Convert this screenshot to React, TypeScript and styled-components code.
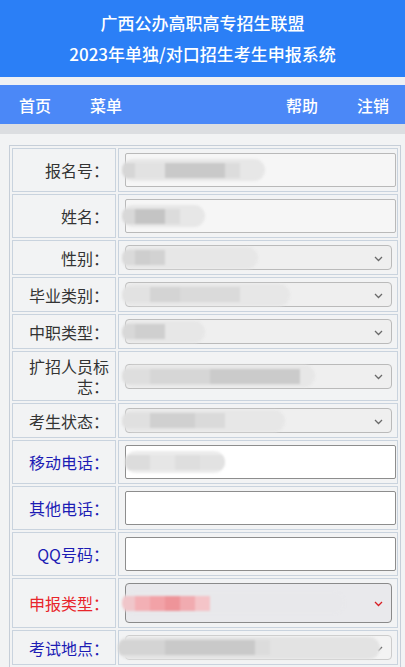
import React from "react";
import styled, { createGlobalStyle } from "styled-components";

const Global = createGlobalStyle`
  html, body { margin: 0; padding: 0; background: #f2f3f4; }
  body { font-family: "Noto Sans CJK SC", "Noto Sans", sans-serif; }
  * { box-sizing: border-box; }
`;

const Page = styled.div`
  width: 405px;
  min-height: 667px;
  overflow: hidden;
  background: #f2f3f4;
`;

const Header = styled.header`
  background: #2b7ff6;
  color: #fff;
  text-align: center;
  padding: 7px 0 8px;
  font-size: 17px;
  line-height: 31px;
  font-weight: 500;
  letter-spacing: 0;
`;

const Gap = styled.div<{ $h: number; $c: string }>`
  height: ${(p) => p.$h}px;
  background: ${(p) => p.$c};
`;

const Nav = styled.nav`
  height: 39px;
  background: #4b88f7;
  display: flex;
  align-items: center;
  padding: 0 16px 0 19px;
  color: #fff;
  font-size: 16px;
  font-weight: 500;
`;

const NavGroup = styled.div`
  display: flex;
  gap: 39px;
`;

const Spacer = styled.div`
  flex: 1;
`;

const NavItem = styled.span`
  white-space: nowrap;
  line-height: 20px;
`;

const Table = styled.table`
  margin: 11px 4px 0 9px;
  width: 392px;
  border: 1px solid #c6ced8;
  border-spacing: 2px;
  table-layout: fixed;
  background: #f2f3f4;
`;

const LabelCell = styled.td<{ $tone: "normal" | "blue" | "red" }>`
  width: 104px;
  border: 1px solid #c9d3de;
  padding: 4px 6px 4px 4px;
  text-align: right;
  vertical-align: middle;
  font-size: 16px;
  line-height: 20px;
  color: ${(p) => (p.$tone === "blue" ? "#1c1cb4" : p.$tone === "red" ? "#e8252b" : "#333")};
`;

const ValueCell = styled.td`
  border: 1px solid #c9d3de;
  padding: 4px 1px 4px 6px;
  vertical-align: middle;
`;

const Field = styled.div`
  position: relative;
`;

const TextInput = styled.input<{ $readonly?: boolean }>`
  display: block;
  width: 100%;
  height: 34px;
  margin: 0;
  border: 1px solid ${(p) => (p.$readonly ? "#b9b9b9" : "#8d8d8d")};
  border-radius: 2px;
  background: ${(p) => (p.$readonly ? "#f6f6f6" : "#fff")};
  font-size: 15px;
  outline: none;
`;

const Select = styled.div<{ $tall?: boolean; $strong?: boolean; $faint?: boolean }>`
  height: ${(p) => (p.$tall ? 40 : 25)}px;
  margin-right: 4px;
  border: 1px solid ${(p) => (p.$strong ? "#8a8a8a" : p.$faint ? "#cccccc" : "#bababa")};
  border-radius: 4px;
  background: ${(p) => (p.$strong ? "#e9e9ec" : p.$faint ? "#f3f3f3" : "#efefef")};
`;

const Chevron = styled.svg`
  position: absolute;
  right: 13px;
  top: 50%;
  width: 9px;
  height: 6px;
  margin-top: -2px;
`;

const Redact = styled.div`
  position: absolute;
  top: 50%;
  height: 22px;
  margin-top: -11px;
  border-radius: 11px;
  background: #e7e7e7;
  filter: blur(1.2px);
  display: flex;
  align-items: center;
  overflow: hidden;
`;

const Block = styled.span`
  display: block;
  height: 15px;
  flex: none;
`;

type Blob = { x: number; w: number; bg?: string; blocks: [number, string][] };
type Row = {
  label: string;
  tone: "normal" | "blue" | "red";
  kind: "ro" | "input" | "select" | "tall" | "faint";
  blob?: Blob;
};

const rows: Row[] = [
  { label: "报名号：", tone: "normal", kind: "ro", blob: { x: -3, w: 143, blocks: [[13, "#d6d6d6"], [30, "#e2e2e2"], [60, "#c9c9c9"], [15, "#dcdcdc"]] } },
  { label: "姓名：", tone: "normal", kind: "ro", blob: { x: -3, w: 83, blocks: [[13, "#d8d8d8"], [30, "#c4c4c4"], [15, "#dcdcdc"]] } },
  { label: "性别：", tone: "normal", kind: "select", blob: { x: -3, w: 136, blocks: [[13, "#dadada"], [15, "#cecece"], [15, "#d2d2d2"]] } },
  { label: "毕业类别：", tone: "normal", kind: "select", blob: { x: -3, w: 168, blocks: [[28, "#e2e2e2"], [30, "#d4d4d4"], [60, "#dadada"]] } },
  { label: "中职类型：", tone: "normal", kind: "select", blob: { x: -3, w: 83, blocks: [[13, "#d8d8d8"], [30, "#cfcfcf"]] } },
  { label: "扩招人员标志：", tone: "normal", kind: "select", blob: { x: -3, w: 193, blocks: [[28, "#dedede"], [60, "#d6d6d6"], [90, "#cbcbcb"]] } },
  { label: "考生状态：", tone: "normal", kind: "select", blob: { x: -3, w: 163, blocks: [[28, "#e0e0e0"], [45, "#d0d0d0"], [30, "#dadada"]] } },
  { label: "移动电话：", tone: "blue", kind: "input", blob: { x: 0, w: 100, bg: "#ececec", blocks: [[25, "#dcdcdc"], [25, "#e6e6e6"], [25, "#dedede"], [25, "#e2e2e2"]] } },
  { label: "其他电话：", tone: "blue", kind: "input" },
  { label: "QQ号码：", tone: "blue", kind: "input" },
  { label: "申报类型：", tone: "red", kind: "tall", blob: { x: -3, w: 223, bg: "#e8e8eb", blocks: [[13, "#f0c6ca"], [15, "#f3b0b5"], [15, "#f2a2a7"], [15, "#ee9499"], [15, "#f1abb0"], [15, "#f4c4c8"]] } },
  { label: "考试地点：", tone: "blue", kind: "faint", blob: { x: -7, w: 262, bg: "#e3e3e3", blocks: [[47, "#d4d4d4"], [90, "#c9c9c9"], [15, "#dcdcdc"]] } },
];

function ChevronIcon({ color }: { color: string }) {
  return (
    <Chevron viewBox="0 0 9 6">
      <path d="M1 1 L4.5 4.5 L8 1" fill="none" stroke={color} strokeWidth="1.3" />
    </Chevron>
  );
}

function FieldBody({ row }: { row: Row }) {
  const isSelect = row.kind === "select" || row.kind === "tall" || row.kind === "faint";
  return (
    <Field>
      {row.kind === "ro" && <TextInput $readonly readOnly />}
      {row.kind === "input" && <TextInput />}
      {isSelect && (
        <Select $tall={row.kind === "tall"} $strong={row.kind === "tall"} $faint={row.kind === "faint"} />
      )}
      {isSelect && <ChevronIcon color={row.kind === "tall" ? "#d81e24" : "#6a6a6a"} />}
      {row.blob && (
        <Redact style={{ left: row.blob.x, width: row.blob.w, background: row.blob.bg }}>
          {row.blob.blocks.map(([w, c], i) => (
            <Block key={i} style={{ width: w, background: c }} />
          ))}
        </Redact>
      )}
    </Field>
  );
}

export default function App() {
  return (
    <Page>
      <Global />
      <Header>
        <div>广西公办高职高专招生联盟</div>
        <div>2023年单独/对口招生考生申报系统</div>
      </Header>
      <Gap $h={8} $c="#eef0f4" />
      <Nav>
        <NavGroup>
          <NavItem>首页</NavItem>
          <NavItem>菜单</NavItem>
        </NavGroup>
        <Spacer />
        <NavGroup>
          <NavItem>帮助</NavItem>
          <NavItem>注销</NavItem>
        </NavGroup>
      </Nav>
      <Gap $h={10} $c="#dcdee1" />
      <Table>
        <tbody>
          {rows.map((row) => (
            <tr key={row.label}>
              <LabelCell $tone={row.tone}>{row.label}</LabelCell>
              <ValueCell>
                <FieldBody row={row} />
              </ValueCell>
            </tr>
          ))}
        </tbody>
      </Table>
    </Page>
  );
}
